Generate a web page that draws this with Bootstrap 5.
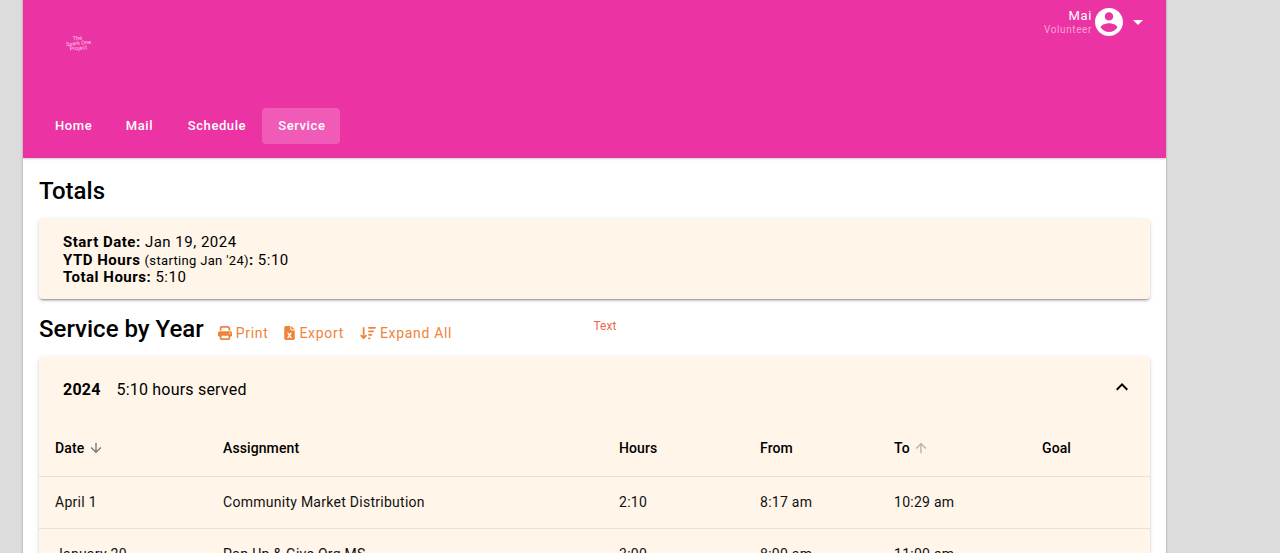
<!DOCTYPE html>
<html lang="en">
<head>
<meta charset="utf-8">
<title>Service</title>
<link href="https://cdn.jsdelivr.net/npm/bootstrap@5.3.0/dist/css/bootstrap.min.css" rel="stylesheet">
<style>
html,body{height:553px;overflow:hidden}
body{background:#dcdcdc;font-family:Roboto,"Liberation Sans",sans-serif;color:#000;padding-left:23px;padding-right:114px}
.frame{background:#fff;height:553px;overflow:hidden;box-shadow:-1px 0 1px rgba(0,0,0,.12),1px 0 1px rgba(0,0,0,.12)}
.topbar{background:#ec33a4;height:158px;padding:0 16px;box-shadow:0 1px 2px rgba(0,0,0,.2);position:relative}
.topline{height:108px;position:relative}
.logo-mark{position:absolute;left:27px;top:36px;width:24px;font-size:5.5px;line-height:4.8px;color:#fbd0ea;text-align:center;transform:rotate(-6deg);white-space:nowrap}
.user-box{position:absolute;right:7px;top:8px;gap:3px}
.user-name{font-size:13px;line-height:15px;letter-spacing:.6px;color:#fff;font-weight:400;text-align:right}
.user-role{font-size:10px;line-height:13px;letter-spacing:.6px;color:#f9a1d6;text-align:right}
.user-caret{width:0;height:0;border-left:5px solid transparent;border-right:5px solid transparent;border-top:5px solid #fff;margin-left:7px;margin-top:1px}
.tabs-row .nav-link{color:#fff;font-size:13px;font-weight:500;letter-spacing:.6px;height:36px;line-height:36px;padding:0 16px;border-radius:4px}
.tabs-row .nav-link.active{background:rgba(255,255,255,.2);padding-right:15px}
.tab-home{margin-right:1.5px}
.tab-mail{margin-right:2.5px}
.page-body{padding:0 16px}
.page-title{font-size:24px;font-weight:500;line-height:32px;margin:0;letter-spacing:0}
.totals-title{padding-top:17px}
.panel-card{background:#fff5e8;border:0;border-radius:4px;box-shadow:0 3px 1px -2px rgba(0,0,0,.2),0 2px 2px 0 rgba(0,0,0,.14),0 1px 5px 0 rgba(0,0,0,.12)}
.totals-card{margin-top:12px;height:80px;padding:15px 24px;font-size:15px;line-height:17.5px;letter-spacing:.5px}
.totals-card b{font-weight:700;letter-spacing:.5px}
.totals-card small{font-size:13px;letter-spacing:.33px}
.year-head{margin-top:14px;height:32px}
.act-link{color:#f0833a;font-size:14px;font-weight:400;letter-spacing:.68px;text-decoration:none;gap:4px;line-height:16px}
.act-row{margin-left:14px;gap:16px;padding-top:12px}
.act-row svg{fill:#f0833a;display:block}
.stray-text{position:absolute;left:593.500px;top:319px;font-size:12px;line-height:14px;color:#f0674a}
.year-card{margin-top:12px;height:260px;overflow:hidden}
.year-bar{height:63px;padding:2px 24px 0;font-size:16px;letter-spacing:.2px}
.year-bar b{font-weight:700;margin-right:16px;letter-spacing:.2px}
.year-bar svg{margin-left:auto;margin-right:-8px;margin-top:-6px}
.svc-table{table-layout:fixed;width:100%;margin:0;--bs-table-bg:transparent;font-size:14px;letter-spacing:.27px}
.svc-table th{height:56px;padding:2px 16px 0;font-weight:500;vertical-align:middle;border-bottom:1px solid #e8e2da;letter-spacing:.1px;color:#000}
.svc-table td{height:52px;padding:1px 16px 0;vertical-align:middle;border-bottom:1px solid #e8e2da;color:#111}
.svc-table svg{display:inline-block;vertical-align:-3px}
</style>
</head>
<body>
<div class="frame">
  <header class="topbar">
    <div class="topline">
      <div class="logo-mark">The<br>Spark One<br>Project</div>
      <div class="user-box d-flex align-items-center">
        <div>
          <div class="user-name">Mai</div>
          <div class="user-role">Volunteer</div>
        </div>
        <svg width="28" height="28" viewBox="2 2 20 20" fill="#fff" aria-hidden="true"><path d="M12 2C6.48 2 2 6.48 2 12s4.48 10 10 10 10-4.48 10-10S17.52 2 12 2zm0 3c1.66 0 3 1.34 3 3s-1.34 3-3 3-3-1.34-3-3 1.34-3 3-3zm0 14.2c-2.5 0-4.71-1.28-6-3.22.03-1.99 4-3.08 6-3.08 1.99 0 5.97 1.09 6 3.08-1.29 1.94-3.5 3.22-6 3.22z"/></svg>
        <span class="user-caret"></span>
      </div>
    </div>
    <ul class="nav tabs-row">
      <li class="nav-item tab-home"><a class="nav-link" href="#">Home</a></li>
      <li class="nav-item tab-mail"><a class="nav-link" href="#">Mail</a></li>
      <li class="nav-item"><a class="nav-link" href="#">Schedule</a></li>
      <li class="nav-item"><a class="nav-link active" href="#">Service</a></li>
    </ul>
  </header>
  <main class="page-body">
    <h1 class="page-title totals-title">Totals</h1>
    <div class="card panel-card totals-card">
      <div><b>Start Date:</b> Jan 19, 2024</div>
      <div><b>YTD Hours</b> <small>(starting Jan '24)</small><b>:</b> 5:10</div>
      <div><b>Total Hours:</b> 5:10</div>
    </div>
    <div class="year-head d-flex align-items-start">
      <h2 class="page-title">Service by Year</h2>
      <div class="act-row d-flex">
        <a class="act-link d-flex align-items-center" href="#"><svg width="14" height="14" viewBox="0 0 512 512" aria-hidden="true"><path d="M128 0C92.700 0 64 28.700 64 64v96h64V64h226.700L384 93.300V160h64V93.300c0-17-6.700-33.300-18.700-45.300L400 18.700C388 6.700 371.700 0 354.700 0H128zM384 352v96H128v-96h256zm64 32h32c17.700 0 32-14.300 32-32V256c0-35.300-28.700-64-64-64H64c-35.300 0-64 28.700-64 64v96c0 17.700 14.300 32 32 32h32v64c0 35.300 28.700 64 64 64h256c35.300 0 64-28.700 64-64v-64zm-16-136a24 24 0 1 1 0 48 24 24 0 1 1 0-48z"/></svg>Print</a>
        <a class="act-link d-flex align-items-center" href="#"><svg width="11" height="14" viewBox="0 0 384 512" aria-hidden="true"><path d="M64 0C28.700 0 0 28.700 0 64v384c0 35.300 28.700 64 64 64h256c35.300 0 64-28.700 64-64V160H256c-17.700 0-32-14.300-32-32V0H64zm192 0v128h128L256 0zM155.700 250.200l36.300 51.900 36.300-51.900c7.600-10.900 22.600-13.500 33.400-5.900s13.500 22.600 5.900 33.400L221.300 344l46.400 66.200c7.600 10.900 5 25.800-5.900 33.400s-25.800 5-33.400-5.900L192 385.800l-36.300 51.900c-7.600 10.900-22.600 13.500-33.400 5.900s-13.500-22.600-5.900-33.400l46.300-66.200-46.400-66.200c-7.600-10.900-5-25.800 5.900-33.400s25.800-5 33.400 5.900z"/></svg>Export</a>
        <a class="act-link d-flex align-items-center" href="#"><svg width="16" height="14" viewBox="0 0 576 512" aria-hidden="true"><path d="M151.600 469.600c-6.100 6.500-14.600 10.400-23.600 10.400s-17.500-3.900-23.600-10.400l-88-96c-11.900-13-11.100-33.300 2-45.200s33.300-11.100 45.200 2L96 365.700V64c0-17.700 14.300-32 32-32s32 14.300 32 32v301.700l32.400-35.400c11.900-13 32.200-13.900 45.200-2s13.900 32.200 2 45.200l-88 96zM320 480c-17.700 0-32-14.300-32-32s14.300-32 32-32h32c17.700 0 32 14.300 32 32s-14.300 32-32 32h-32zm0-128c-17.700 0-32-14.300-32-32s14.300-32 32-32h96c17.700 0 32 14.300 32 32s-14.300 32-32 32h-96zm0-128c-17.700 0-32-14.300-32-32s14.300-32 32-32h160c17.700 0 32 14.300 32 32s-14.300 32-32 32H320zm0-128c-17.700 0-32-14.300-32-32s14.300-32 32-32h224c17.700 0 32 14.300 32 32s-14.300 32-32 32H320z"/></svg>Expand All</a>
      </div>
    </div>
    <div class="stray-text">Text</div>
    <section class="card panel-card year-card">
      <div class="year-bar d-flex align-items-center">
        <b>2024</b><span>5:10 hours served</span>
        <svg width="24" height="24" viewBox="0 0 24 24" fill="#000" aria-hidden="true"><path d="M12 8l-6 6 1.410 1.410L12 10.830l4.590 4.580L18 14z"/></svg>
      </div>
      <table class="table svc-table">
        <colgroup><col style="width:168px"><col style="width:396px"><col style="width:141px"><col style="width:134px"><col style="width:148px"><col></colgroup>
        <thead>
          <tr>
            <th>Date <svg width="16" height="16" viewBox="0 0 24 24" fill="#757575" aria-hidden="true"><path d="M20 12l-1.410-1.410L13 16.170V4h-2v12.170l-5.580-5.590L4 12l8 8z"/></svg></th>
            <th>Assignment</th><th>Hours</th><th>From</th>
            <th>To <svg width="16" height="16" viewBox="0 0 24 24" fill="#b5b1aa" aria-hidden="true"><path d="M4 12l1.410 1.410L11 7.830V20h2V7.830l5.580 5.590L20 12l-8-8z"/></svg></th>
            <th>Goal</th>
          </tr>
        </thead>
        <tbody>
          <tr><td>April 1</td><td>Community Market Distribution</td><td>2:10</td><td>8:17 am</td><td>10:29 am</td><td></td></tr>
          <tr><td>January 20</td><td>Pop Up &amp; Give Org MS</td><td>3:00</td><td>8:00 am</td><td>11:00 am</td><td></td></tr>
        </tbody>
      </table>
    </section>
  </main>
</div>
<script src="https://cdn.jsdelivr.net/npm/bootstrap@5.3.0/dist/js/bootstrap.bundle.min.js"></script>
</body>
</html>
